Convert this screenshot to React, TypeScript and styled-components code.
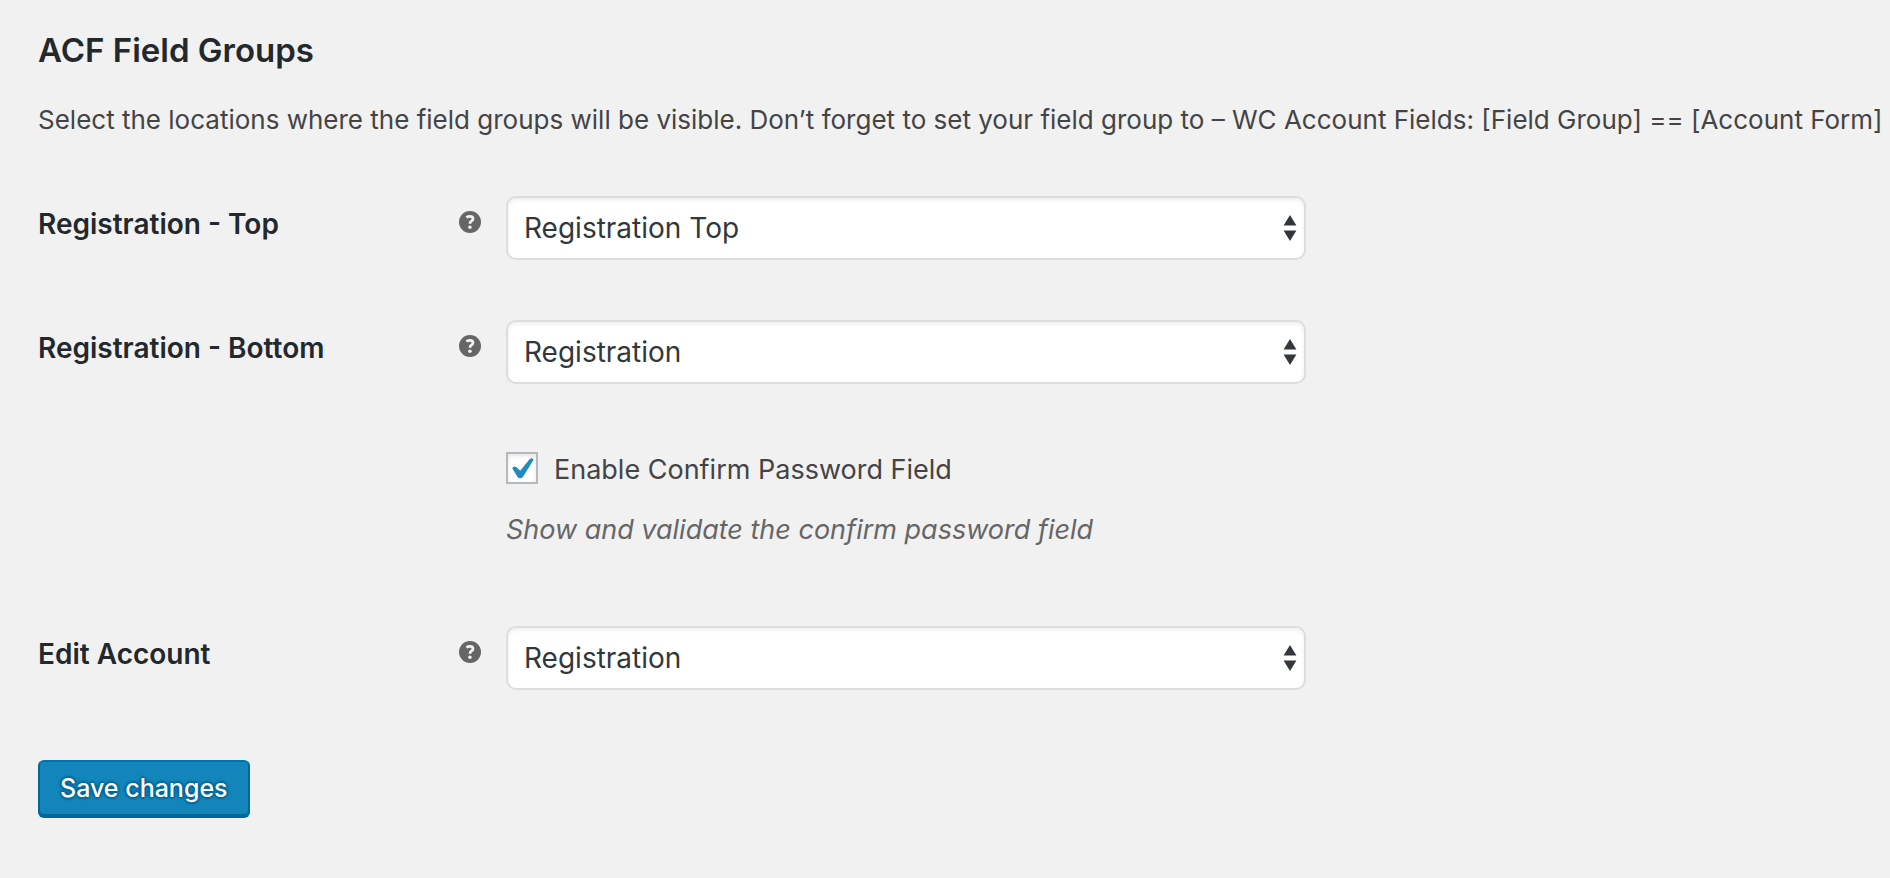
import React, { useState } from 'react';
import styled, { createGlobalStyle } from 'styled-components';

const GlobalStyle = createGlobalStyle`
  *, *::before, *::after { box-sizing: border-box; }
  body {
    margin: 0;
    background: #f1f1f1;
    color: #444;
    font-family: Inter, "Open Sans", sans-serif;
    font-size: 26px;
    line-height: 40px;
  }
`;

const Form = styled.form`
  padding: 28px 0 60px 38px;
`;

const Title = styled.h2`
  margin: 0 0 28px;
  color: #23282d;
  font-size: 33px;
  font-weight: 600;
  line-height: 44px;
`;

const Intro = styled.p`
  margin: 0 0 56px;
`;

const Row = styled.div`
  display: grid;
  grid-template-columns: 420px 48px minmax(0, 800px);
  margin-bottom: 60px;
`;

const RowLabel = styled.label`
  padding-top: 8px;
  color: #23282d;
  font-size: 28px;
  font-weight: 600;
`;

const HelpIcon = styled.svg`
  width: 24px;
  height: 24px;
  margin-top: 14px;
`;

const SelectBox = styled.div`
  position: relative;
  display: flex;
`;

const Select = styled.select`
  appearance: none;
  width: 100%;
  height: 64px;
  padding: 0 48px 0 16px;
  border: 2px solid #ddd;
  border-radius: 10px;
  background: #fff;
  box-shadow: inset 0 2px 4px rgba(0, 0, 0, 0.07);
  color: #32373c;
  font: inherit;
  font-size: 28px;
`;

const SelectArrows = styled.svg`
  position: absolute;
  top: 18px;
  right: 9px;
  width: 14px;
  height: 28px;
  pointer-events: none;
`;

const CheckField = styled.div`
  grid-column: 3;
  padding-top: 6px;
  font-size: 27px;
`;

const CheckLabel = styled.label`
  display: flex;
  align-items: center;
  gap: 16px;
`;

const CheckBox = styled.span`
  position: relative;
  display: flex;
  width: 32px;
  height: 32px;
  margin-bottom: 4px;
`;

const CheckInput = styled.input`
  appearance: none;
  width: 32px;
  height: 32px;
  margin: 0;
  border: 2px solid #b4b9be;
  background: #fff;
  box-shadow: inset 0 2px 4px rgba(0, 0, 0, 0.1);
`;

const CheckMark = styled.svg`
  position: absolute;
  inset: 0;
  pointer-events: none;
`;

const Description = styled.p`
  margin: 20px 0 16px;
  color: #666;
  font-style: italic;
`;

const SaveButton = styled.button`
  display: block;
  height: 58px;
  margin-top: 70px;
  padding: 0 20px 2px;
  border: 2px solid;
  border-color: #0073aa #006799 #006799;
  border-radius: 6px;
  background: #1285ba;
  box-shadow: inset 0 -2px 0 #006799;
  color: #fff;
  font: inherit;
  font-size: 25px;
  font-weight: 500;
  text-shadow: 0 -2px 2px #006799, 2px 0 2px #006799, 0 2px 2px #006799, -2px 0 2px #006799;
`;

const options = ['Registration Top', 'Registration'];

function Help() {
  return (
    <HelpIcon viewBox="0 0 24 24" role="img" aria-label="Help">
      <circle cx="12" cy="12" r="11" fill="#666" />
      <path d="M8.4 7.5Q10 6.3 12 6.3Q15 6.3 15 8.7Q15 10.1 13.3 11.1Q12 11.9 12 13.8" fill="none" stroke="#f1f1f1" strokeWidth="2.8" />
      <circle cx="11.9" cy="17.3" r="1.8" fill="#f1f1f1" />
    </HelpIcon>
  );
}

function SelectRow({ id, label, initial }: { id: string; label: string; initial: string }) {
  return (
    <Row>
      <RowLabel htmlFor={id}>{label}</RowLabel>
      <Help />
      <SelectBox>
        <Select id={id} defaultValue={initial}>
          {options.map((o) => (
            <option key={o}>{o}</option>
          ))}
        </Select>
        <SelectArrows viewBox="0 0 14 28" aria-hidden="true">
          <path d="M7 1L13.4 11.5H0.6ZM7 27L13.4 16.5H0.6Z" fill="#32373c" />
        </SelectArrows>
      </SelectBox>
    </Row>
  );
}

export default function App() {
  const [confirm, setConfirm] = useState(true);
  return (
    <>
      <GlobalStyle />
      <Form onSubmit={(e: React.FormEvent) => e.preventDefault()}>
        <Title>ACF Field Groups</Title>
        <Intro>
          Select the locations where the field groups will be visible. Don’t forget to set your field group to – WC
          Account Fields: [Field Group] == [Account Form]
        </Intro>
        <SelectRow id="registration-top" label="Registration - Top" initial="Registration Top" />
        <SelectRow id="registration-bottom" label="Registration - Bottom" initial="Registration" />
        <Row>
          <CheckField>
            <CheckLabel>
              <CheckBox>
                <CheckInput type="checkbox" checked={confirm} onChange={(e) => setConfirm(e.target.checked)} />
                {confirm && (
                  <CheckMark viewBox="0 0 32 32" aria-hidden="true">
                    <path d="M6.2 16.2Q7.6 13.6 10.2 15L14.2 18.8L23.6 7.2Q26 5 27.6 7.8L17.2 24.4Q14.4 28 11.4 24.8Z" fill="#1e8cbe" />
                  </CheckMark>
                )}
              </CheckBox>
              Enable Confirm Password Field
            </CheckLabel>
            <Description>Show and validate the confirm password field</Description>
          </CheckField>
        </Row>
        <SelectRow id="edit-account" label="Edit Account" initial="Registration" />
        <SaveButton type="submit">Save changes</SaveButton>
      </Form>
    </>
  );
}
